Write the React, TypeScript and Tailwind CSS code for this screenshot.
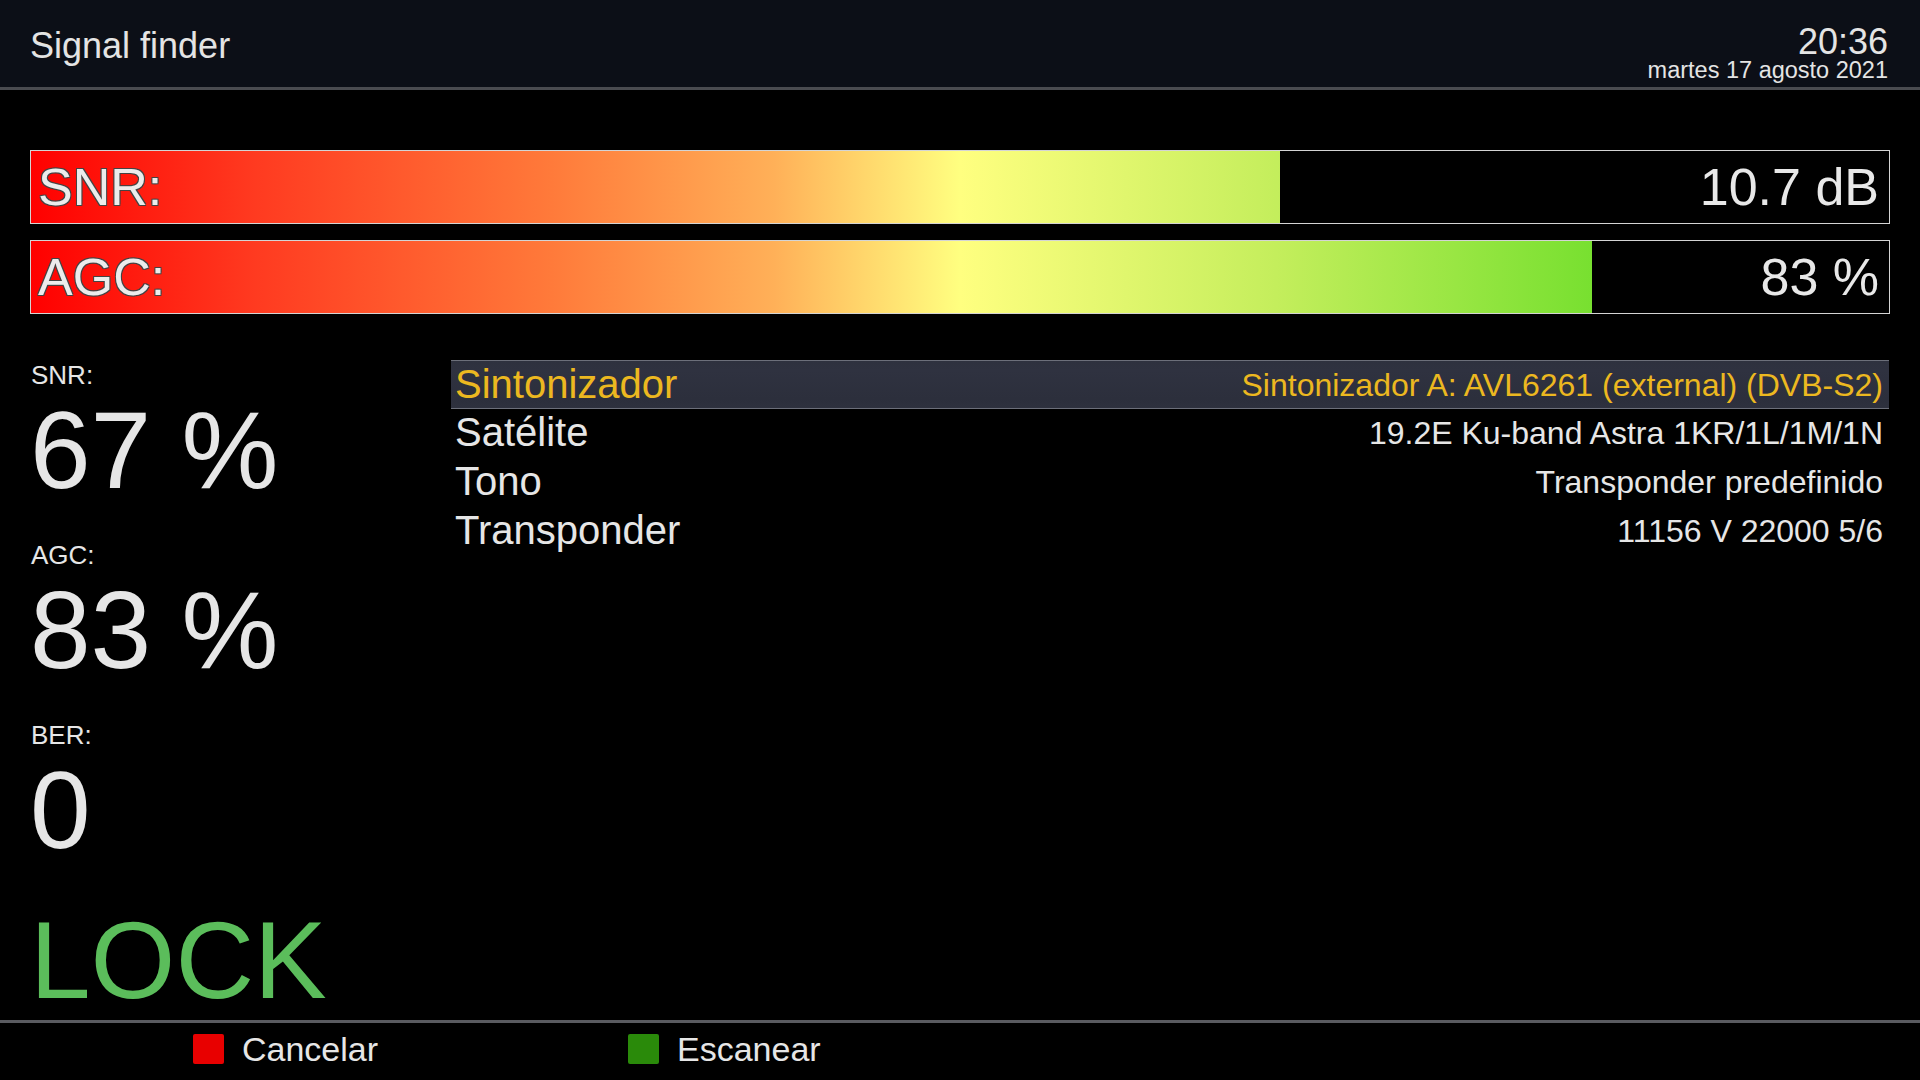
const bars = [
  { label: "SNR:", value: "10.7 dB", fill: 67.2 },
  { label: "AGC:", value: "83 %", fill: 84 },
];

const readings = [
  { label: "SNR:", value: "67 %" },
  { label: "AGC:", value: "83 %" },
  { label: "BER:", value: "0" },
];

const tunerRows = [
  { name: "Sintonizador", value: "Sintonizador A: AVL6261 (external) (DVB-S2)" },
  { name: "Satélite", value: "19.2E Ku-band Astra 1KR/1L/1M/1N" },
  { name: "Tono", value: "Transponder predefinido" },
  { name: "Transponder", value: "11156 V 22000 5/6" },
];

function LevelBar({ label, value, fill }: { label: string; value: string; fill: number }) {
  return (
    <div className="grid h-[74px] grid-rows-[72px] border border-[#d4d4d4] bg-black">
      {/* gradient spans the whole bar, the fill only shows its left part */}
      <div className="col-start-1 row-start-1 h-full overflow-hidden" style={{ width: `${fill}%` }}>
        <div
          className="h-full bg-[linear-gradient(90deg,#ff0000_0%,#ff3a20_12%,#ff7a3a_28%,#ffb058_40%,#ffff80_50%,#c4ee5c_67%,#78e030_84%,#52d81a_100%)]"
          style={{ width: `${10000 / fill}%` }}
        />
      </div>
      <div className="col-start-1 row-start-1 flex items-center justify-between pl-[7px] pr-[10px]">
        <span className="text-[52px] leading-[58px] text-[#ececec] [text-shadow:-1px_-1px_0_#444,1px_-1px_0_#444,-1px_1px_0_#444,1px_1px_0_#444]">
          {label}
        </span>
        <span className="text-[52px] leading-[58px] text-[#e8e8e8]">{value}</span>
      </div>
    </div>
  );
}

function KeyHint({ color, text, width }: { color: string; text: string; width: string }) {
  return (
    <div className={`flex items-center gap-[18px] ${width}`}>
      <span className={`h-[30px] w-[31px] rounded-[2px] ${color}`} />
      <span className="text-[34px] leading-[40px] text-[#e6e6e6]">{text}</span>
    </div>
  );
}

export default function App() {
  return (
    <div className="flex h-[1080px] w-[1920px] flex-col overflow-hidden bg-black font-['Liberation_Sans',Arial,sans-serif] text-[#e6e6e6]">
      {/* title bar */}
      <header className="flex h-[90px] justify-between border-b-[3px] border-[#4a4b50] bg-[#0c0f17] pl-[30px] pr-[32px]">
        <h1 className="pt-[28px] text-[36px] leading-[36px] text-[#e4e4e4]">Signal finder</h1>
        <div className="flex flex-col items-end pt-[25px]">
          <span className="text-[36px] leading-[34px] text-[#e4e4e4]">20:36</span>
          <span className="mt-[1px] text-[23.5px] leading-[20px] text-[#e4e4e4]">martes 17 agosto 2021</span>
        </div>
      </header>

      <section className="mt-[60px] flex flex-col gap-[16px] pl-[30px] pr-[30px]">
        {bars.map((b) => (
          <LevelBar key={b.label} {...b} />
        ))}
      </section>

      <main className="mt-[46px] flex flex-1 pl-[30px] pr-[31px]">
        <div className="flex w-[421px] flex-col">
          {readings.map((r, i) => (
            <div key={r.label} className={i > 0 ? "mt-[37px]" : ""}>
              <div className="pl-[1px] text-[26px] leading-[30px]">{r.label}</div>
              <div className="mt-[7px] text-[109px] leading-[106px]">{r.value}</div>
            </div>
          ))}
          <div className="mt-[44px] text-[109px] leading-[106px] text-[#5bbd5b]">LOCK</div>
        </div>

        <div className="flex flex-1 flex-col">
          {tunerRows.map((row, i) => (
            <div
              key={row.name}
              className={`flex h-[49px] items-baseline justify-between pl-[4px] pr-[6px] ${
                i === 0
                  ? "border-y border-[#6c6f7a] bg-[linear-gradient(180deg,#33364400,#2f3240_20%,#2c2f3c_80%,#33364400)] bg-[#2e313e] text-[#ecb820]"
                  : ""
              }`}
            >
              <span className="text-[40px] leading-[47px]">{row.name}</span>
              <span className="-translate-y-[2px] text-[32px] leading-[47px]">{row.value}</span>
            </div>
          ))}
        </div>
      </main>

      {/* colour key hints */}
      <footer className="flex h-[60px] items-center border-t-[3px] border-[#5a5b60] pb-[5px] pl-[193px]">
        <KeyHint color="bg-[#e80000]" text="Cancelar" width="w-[435px]" />
        <KeyHint color="bg-[#2a8a0a]" text="Escanear" width="w-[300px]" />
      </footer>
    </div>
  );
}
